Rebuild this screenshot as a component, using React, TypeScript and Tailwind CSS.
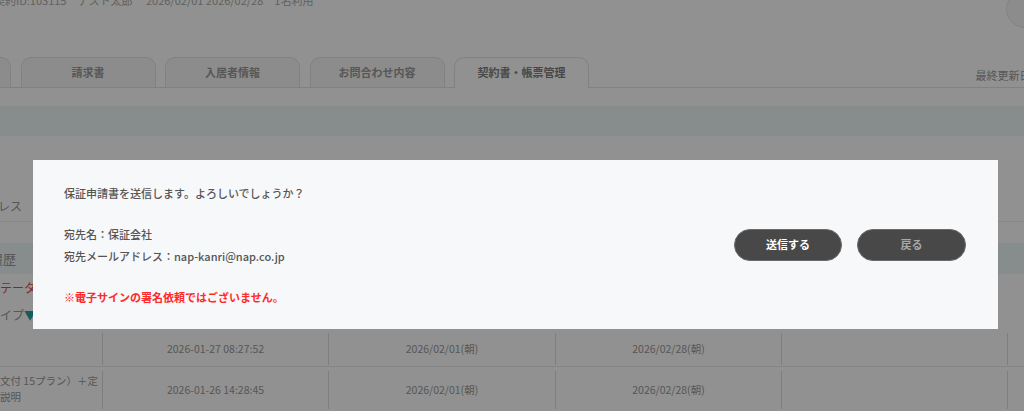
import React from 'react'

const tabs = ['請求書', '入居者情報', 'お問合わせ内容']

const rows = [
  { label: '', sent: '2026-01-27 08:27:52', from: '2026/02/01(朝)', to: '2026/02/28(朝)' },
  { label: '文付 15プラン）＋定\n説明', sent: '2026-01-26 14:28:45', from: '2026/02/01(朝)', to: '2026/02/28(朝)' },
]

function Page() {
  return (
    <div className="h-[411px] w-[1024px] overflow-hidden bg-white text-[#999]">
      {/* header */}
      <div className="flex h-[58px] items-start justify-between">
        <div className="-ml-[6px] -mt-[7px] whitespace-pre text-[11px] leading-[14px] text-[#aaa]">
          契約ID:103115　テスト太郎　 2026/02/01 2026/02/28　1名利用
        </div>
        <div className="-mr-[20px] -mt-[10px] h-[38px] w-[38px] rounded-full border border-[#e5e5e5] bg-[#f7f7f7]" />
      </div>

      {/* tabs */}
      <div className="flex h-[30px] items-end gap-[9.5px] border-b border-[#e3e3e3]">
        <div className="-ml-[124px] h-[30px] w-[135px] shrink-0 rounded-t-[10px] border border-b-0 border-[#e3e3e3] bg-[#f7f7f7]" />
        {tabs.map((t) => (
          <div
            key={t}
            className="flex h-[30px] w-[135px] shrink-0 items-center justify-center rounded-t-[10px] border border-b-0 border-[#e3e3e3] bg-[#f7f7f7] text-[11px] font-bold text-[#9a9a9a]"
          >
            {t}
          </div>
        ))}
        <div className="-mb-px flex h-[31px] w-[135px] shrink-0 items-center justify-center rounded-t-[10px] border border-b-0 border-[#e3e3e3] bg-white pb-px text-[11px] font-bold text-[#808080]">
          契約書・帳票管理
        </div>
        <div className="ml-[377px] shrink-0 self-center whitespace-nowrap pt-[6px] text-[11px] text-[#999]">
          最終更新日時：2026-01-27 08:27
        </div>
      </div>

      <div className="mt-[18px] h-[30px] bg-[#eef6f6]" />

      <div className="mt-[20px] pl-[118px] text-[11px] leading-[20px] text-[#999]">入居者情報</div>

      {/* label rows */}
      <div className="mt-[14px] flex h-[32px] items-center border-b border-[#eee]">
        <span className="-ml-[62px] whitespace-nowrap text-[12px]">メールアドレス</span>
      </div>
      <div className="mt-[21px] flex h-[31px] items-center bg-[#eef6f6]">
        <span className="-ml-[36px] whitespace-nowrap text-[13px]">送信履歴</span>
      </div>
      <div className="flex h-[28px] items-center">
        <span className="-ml-[12px] whitespace-nowrap text-[12px] text-[#e04b4b]">ステータス</span>
      </div>
      <div className="flex h-[25px] items-center">
        <span className="-ml-[12px] whitespace-nowrap text-[12px]">
          タイプ<span className="text-[#22a3a3]">▼</span>
        </span>
      </div>

      {/* table */}
      <div className="mt-[5px]">
        {rows.map((r, i) => (
          <div
            key={i}
            className={
              i === 0
                ? 'grid h-[35px] grid-cols-[102px_226px_227px_226px_227px_1fr] border-b border-[#e8e8e8] py-[1px] text-[10.5px]'
                : 'grid h-[42px] grid-cols-[102px_226px_227px_226px_227px_1fr] pt-[4px] text-[10.5px]'
            }
          >
            <div className="overflow-hidden whitespace-pre pt-[2px] text-[10.5px] leading-[16px] text-[#999]">{r.label}</div>
            <div className="flex items-center justify-center border-l border-[#dedede] text-[#999]">{r.sent}</div>
            <div className="flex items-center justify-center border-l border-[#dedede] text-[#999]">{r.from}</div>
            <div className="flex items-center justify-center border-l border-[#dedede] text-[#999]">{r.to}</div>
            <div className="border-l border-r border-[#dedede]" />
            <div />
          </div>
        ))}
      </div>
    </div>
  )
}

function ConfirmDialog() {
  return (
    <div className="fixed inset-0 bg-black/[0.43]">
      <div className="absolute left-[33px] top-[160px] flex h-[169px] w-[965px] items-center justify-between bg-[#f7f8fa] pl-[31px] pr-[32px]">
        <div className="self-start pt-[22px] text-[11px] font-medium leading-[22px] text-[#555]">
          <p>保証申請書を送信します。よろしいでしょうか？</p>
          <div className="mt-[19px]">
            <p>宛先名：保証会社</p>
            <p>宛先メールアドレス：nap-kanri@nap.co.jp</p>
          </div>
          <p className="mt-[19px] font-bold text-[#ff2a2a]">※電子サインの署名依頼ではございません。</p>
        </div>
        <div className="flex gap-[15px]">
          <button className="h-[32px] w-[108px] rounded-full border border-[#6a6a6a] bg-[#484848] text-[11px] font-bold text-white">
            送信する
          </button>
          <button className="h-[32px] w-[109px] rounded-full border border-[#6a6a6a] bg-[#484848] text-[11px] font-bold text-[#a8a8a8]">
            戻る
          </button>
        </div>
      </div>
    </div>
  )
}

export default function App() {
  return (
    <div className="relative h-[411px] w-[1024px] overflow-hidden font-['Noto_Sans_CJK_JP','Noto_Sans',sans-serif]">
      <Page />
      <ConfirmDialog />
    </div>
  )
}
